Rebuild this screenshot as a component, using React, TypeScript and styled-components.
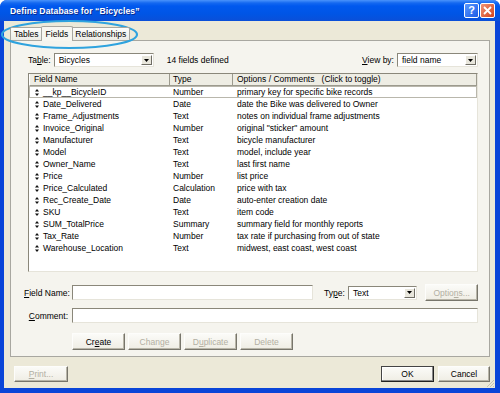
import React from "react";
import styled, { createGlobalStyle } from "styled-components";

const GlobalStyle = createGlobalStyle`
  html, body {
    margin: 0;
    padding: 0;
    background: #fff;
  }
  body {
    font-family: "Liberation Sans", Arial, sans-serif;
    font-size: 8.5px;
    color: #000;
  }
`;

type Field = {
  name: string;
  type: string;
  comment: string;
};

const fields: Field[] = [
  { name: "__kp__BicycleID", type: "Number", comment: "primary key for specific bike records" },
  { name: "Date_Delivered", type: "Date", comment: "date the Bike was delivered to Owner" },
  { name: "Frame_Adjustments", type: "Text", comment: "notes on individual frame adjustments" },
  { name: "Invoice_Original", type: "Number", comment: "original \"sticker\" amount" },
  { name: "Manufacturer", type: "Text", comment: "bicycle manufacturer" },
  { name: "Model", type: "Text", comment: "model, include year" },
  { name: "Owner_Name", type: "Text", comment: "last first name" },
  { name: "Price", type: "Number", comment: "list price" },
  { name: "Price_Calculated", type: "Calculation", comment: "price with tax" },
  { name: "Rec_Create_Date", type: "Date", comment: "auto-enter creation date" },
  { name: "SKU", type: "Text", comment: "item code" },
  { name: "SUM_TotalPrice", type: "Summary", comment: "summary field for monthly reports" },
  { name: "Tax_Rate", type: "Number", comment: "tax rate if purchasing from out of state" },
  { name: "Warehouse_Location", type: "Text", comment: "midwest, east coast, west coast" },
];

const SortHandle = () => (
  <svg width="4" height="7" viewBox="0 0 4 7">
    <polygon points="2,0 4,2.6 0,2.6" fill="#111" />
    <polygon points="0,4.4 4,4.4 2,7" fill="#111" />
  </svg>
);

const Combo = ({ value, width }: { value: string; width: number }) => (
  <ComboBox $width={width}>
    <ComboValue>{value}</ComboValue>
    <DropButton>
      <svg width="5" height="3" viewBox="0 0 5 3">
        <polygon points="0,0 5,0 2.5,3" fill="#000" />
      </svg>
    </DropButton>
  </ComboBox>
);

export default function App() {
  return (
    <>
      <GlobalStyle />
      <Window>
        <TitleBar>
          <Title>Define Database for “Bicycles”</Title>
          <TitleButtons>
            <HelpButton>?</HelpButton>
            <CloseButton>
              <svg width="9" height="9" viewBox="0 0 9 9">
                <path d="M1 1 L8 8 M8 1 L1 8" stroke="#fff" strokeWidth="1.8" />
              </svg>
            </CloseButton>
          </TitleButtons>
        </TitleBar>

        <Body>
          <TabStrip>
            <Tab>Tables</Tab>
            <Tab $active>Fields</Tab>
            <Tab>Relationships</Tab>
          </TabStrip>

          <Panel>
            <TopRow>
              <Label>
                Ta<u>b</u>le:
              </Label>
              <Combo value="Bicycles" width={100} />
              <Count>14 fields defined</Count>
              <Spacer />
              <Label>
                <u>V</u>iew by:
              </Label>
              <Combo value="field name" width={81} />
            </TopRow>

            <ListBox>
              <HeaderRow>
                <HeaderCell>Field Name</HeaderCell>
                <HeaderCell>Type</HeaderCell>
                <HeaderCell>
                  Options / Comments&nbsp;&nbsp;&nbsp;(Click to toggle)
                </HeaderCell>
              </HeaderRow>
              {fields.map((f, i) => (
                <Row key={f.name} $selected={i === 0}>
                  <NameCell>
                    <SortHandle />
                    <span>{f.name}</span>
                  </NameCell>
                  <Cell>{f.type}</Cell>
                  <Cell>{f.comment}</Cell>
                </Row>
              ))}
            </ListBox>

            <FormRow $top={13}>
              <FormLabel>
                <u>F</u>ield Name:
              </FormLabel>
              <TextInput $width={243} />
              <TypeLabel>
                Ty<u>p</u>e:
              </TypeLabel>
              <Combo value="Text" width={70} />
              <Button $width={53} $disabled style={{ marginLeft: 8 }}>
                Optio<u>n</u>s...
              </Button>
            </FormRow>

            <FormRow $top={8}>
              <FormLabel>
                <u>C</u>omment:
              </FormLabel>
              <TextInput />
            </FormRow>

            <ButtonRow>
              <Button $width={53}>
                Cr<u>e</u>ate
              </Button>
              <Button $width={53} $disabled>
                Chan<u>g</u>e
              </Button>
              <Button $width={53} $disabled>
                D<u>u</u>plicate
              </Button>
              <Button $width={53} $disabled>
                Delete
              </Button>
            </ButtonRow>
          </Panel>

          <Footer>
            <Button $width={54} $disabled>
              <u>P</u>rint...
            </Button>
            <Spacer />
            <Button $width={53} $default>
              OK
            </Button>
            <Button $width={52}>Cancel</Button>
          </Footer>
        </Body>

        <Grip>
          <svg width="10" height="10" viewBox="0 0 10 10">
            <path d="M9 2 L2 9 M9 5 L5 9 M9 8 L8 9" stroke="#c5c2b2" strokeWidth="1" />
          </svg>
        </Grip>

        <Annotation width="140" height="32" viewBox="0 0 140 32">
          <ellipse cx="69.5" cy="15.5" rx="67.5" ry="13.5" fill="none" stroke="#2fa3de" strokeWidth="2.2" />
        </Annotation>
      </Window>
    </>
  );
}

const Window = styled.div`
  position: relative;
  width: 500px;
  height: 393px;
  display: flex;
  flex-direction: column;
  background: #0a45d8;
  border-radius: 7px 7px 0 0;
  overflow: hidden;
`;

const TitleBar = styled.div`
  height: 21px;
  flex: none;
  display: flex;
  align-items: center;
  padding: 0 5px 0 10px;
  background: linear-gradient(
    #4a93fb 0px,
    #1468f0 3px,
    #0058ee 6px,
    #0055e5 14px,
    #0a4fd8 21px
  );
`;

const Title = styled.div`
  flex: 1;
  color: #fff;
  font-weight: bold;
  font-size: 8.6px;
  letter-spacing: 0.1px;
  text-shadow: 1px 1px 0 #0b2a8c;
`;

const TitleButtons = styled.div`
  display: flex;
  gap: 1px;
`;

const HelpButton = styled.div`
  width: 13px;
  height: 13px;
  border: 1px solid #fff;
  border-radius: 2px;
  background: linear-gradient(135deg, #5a98ff, #1c5be6);
  color: #fff;
  font-weight: bold;
  font-size: 11px;
  line-height: 13px;
  text-align: center;
`;

const CloseButton = styled.div`
  width: 13px;
  height: 13px;
  border: 1px solid #fff;
  border-radius: 2px;
  background: linear-gradient(135deg, #f09477, #d2431c);
  display: flex;
  align-items: center;
  justify-content: center;
`;

const Body = styled.div`
  flex: 1;
  margin: 0 5px 5px 4px;
  background: #ece9d8;
  display: flex;
  flex-direction: column;
  padding: 5px 5px 0 6px;
`;

const TabStrip = styled.div`
  height: 14px;
  display: flex;
  align-items: flex-end;
  position: relative;
  z-index: 1;
`;

const Tab = styled.div<{ $active?: boolean }>`
  height: ${(p) => (p.$active ? 15 : 13)}px;
  margin-bottom: ${(p) => (p.$active ? -1 : 0)}px;
  box-sizing: border-box;
  padding: ${(p) => (p.$active ? "1px 4px 0" : "0 3px")};
  margin-left: ${(p) => (p.$active ? -2 : 0)}px;
  margin-right: ${(p) => (p.$active ? -2 : 0)}px;
  line-height: 12px;
  border: 1px solid #a8a7a0;
  border-bottom: none;
  border-radius: 2px 2px 0 0;
  background: ${(p) =>
    p.$active ? "#f7f6f0" : "linear-gradient(#fdfdfc, #ecebe5)"};
  z-index: ${(p) => (p.$active ? 2 : 1)};
  white-space: nowrap;
  & + & {
    border-left: ${(p) => (p.$active ? "1px solid #a8a7a0" : "1px solid #6f6d64")};
  }
`;

const Panel = styled.div`
  height: 317px;
  box-sizing: border-box;
  border: 1px solid #a8a7a0;
  background: #f5f4ee;
  padding: 12px 11px 0 13px;
  display: flex;
  flex-direction: column;
`;

const TopRow = styled.div`
  height: 14px;
  display: flex;
  align-items: center;
  padding-left: 4px;
`;

const Label = styled.span`
  margin-right: 3px;
  white-space: nowrap;
`;

const Count = styled.span`
  margin-left: 13px;
`;

const Spacer = styled.div`
  flex: 1;
`;

const ComboBox = styled.div<{ $width: number }>`
  width: ${(p) => p.$width}px;
  height: 14px;
  box-sizing: border-box;
  display: flex;
  align-items: center;
  background: #fff;
  border: 1px solid;
  border-color: #8a877a #e6e4da #e6e4da #8a877a;
  padding: 1px;
`;

const ComboValue = styled.span`
  flex: 1;
  padding-left: 3px;
  white-space: nowrap;
`;

const DropButton = styled.div`
  width: 11px;
  height: 10px;
  box-sizing: border-box;
  display: flex;
  align-items: center;
  justify-content: center;
  background: #e8e6dc;
  border: 1px solid;
  border-color: #fff #6f6d64 #6f6d64 #fff;
`;

const ListBox = styled.div`
  height: 199px;
  box-sizing: border-box;
  margin: 6px 0 0 4px;
  background: #fff;
  border: 1px solid;
  border-color: #8a877a #e6e4da #e6e4da #8a877a;
  display: grid;
  grid-template-columns: 141px 63px 1fr;
  grid-auto-rows: 12px;
  align-content: start;
`;

const HeaderRow = styled.div`
  display: contents;
`;

const HeaderCell = styled.div`
  background: #eeede4;
  border-bottom: 1px solid #9c9a8e;
  border-right: 1px solid #9c9a8e;
  padding-left: 4px;
  line-height: 11px;
  white-space: nowrap;
  &:first-child {
    border-left: 1px solid #fff;
  }
  &:nth-child(2) {
    padding-left: 3px;
  }
`;

const Row = styled.div<{ $selected?: boolean }>`
  display: contents;
  & > div {
    white-space: nowrap;
    box-sizing: border-box;
    border-top: 1px solid ${(p) => (p.$selected ? "#b9b7ac" : "transparent")};
    border-bottom: 1px solid ${(p) => (p.$selected ? "#b9b7ac" : "transparent")};
    line-height: 10px;
  }
  & > div:first-child {
    border-left: 1px solid ${(p) => (p.$selected ? "#b9b7ac" : "transparent")};
  }
  & > div:last-child {
    border-right: 1px solid ${(p) => (p.$selected ? "#b9b7ac" : "transparent")};
  }
`;

const NameCell = styled.div`
  display: flex;
  align-items: center;
  gap: 4px;
  padding-left: 5px;
`;

const Cell = styled.div`
  padding-left: 3px;
  &:last-child {
    padding-left: 4px;
  }
`;

const FormRow = styled.div<{ $top: number }>`
  display: flex;
  align-items: center;
  margin-top: ${(p) => p.$top}px;
  height: 15px;
`;

const FormLabel = styled.span`
  width: 44px;
  text-align: right;
  white-space: nowrap;
  margin-right: 4px;
`;

const TypeLabel = styled.span`
  margin: 0 3px 0 11px;
`;

const TextInput = styled.div<{ $width?: number }>`
  ${(p) => (p.$width ? `width: ${p.$width}px;` : "flex: 1;")}
  height: 15px;
  box-sizing: border-box;
  background: #fff;
  border: 1px solid;
  border-color: #8a877a #e6e4da #e6e4da #8a877a;
`;

const ButtonRow = styled.div`
  display: flex;
  gap: 3px;
  margin: 10px 0 0 48px;
`;

const Button = styled.div<{ $width: number; $disabled?: boolean; $default?: boolean }>`
  width: ${(p) => p.$width}px;
  height: 17px;
  box-sizing: border-box;
  display: flex;
  align-items: center;
  justify-content: center;
  white-space: nowrap;
  color: ${(p) => (p.$disabled ? "#b2afa2" : "#000")};
  background: linear-gradient(#fbfbf8, #efede4);
  border: 1px solid;
  border-color: ${(p) =>
    p.$default ? "#444 #222 #222 #444" : "#fdfdfb #77756b #77756b #fdfdfb"};
  box-shadow: ${(p) =>
    p.$default ? "inset -1px -1px 0 #888, inset 1px 1px 0 #fff" : "inset -1px -1px 0 #b8b5a8"};
`;

const Footer = styled.div`
  flex: 1;
  display: flex;
  align-items: flex-start;
  gap: 4px;
  padding: 9px 0 0 4px;
  & > div {
    height: 16px;
  }
`;

const Grip = styled.div`
  position: absolute;
  right: 5px;
  bottom: 5px;
  width: 10px;
  height: 10px;
`;

const Annotation = styled.svg`
  position: absolute;
  left: 0;
  top: 19px;
  pointer-events: none;
`;
